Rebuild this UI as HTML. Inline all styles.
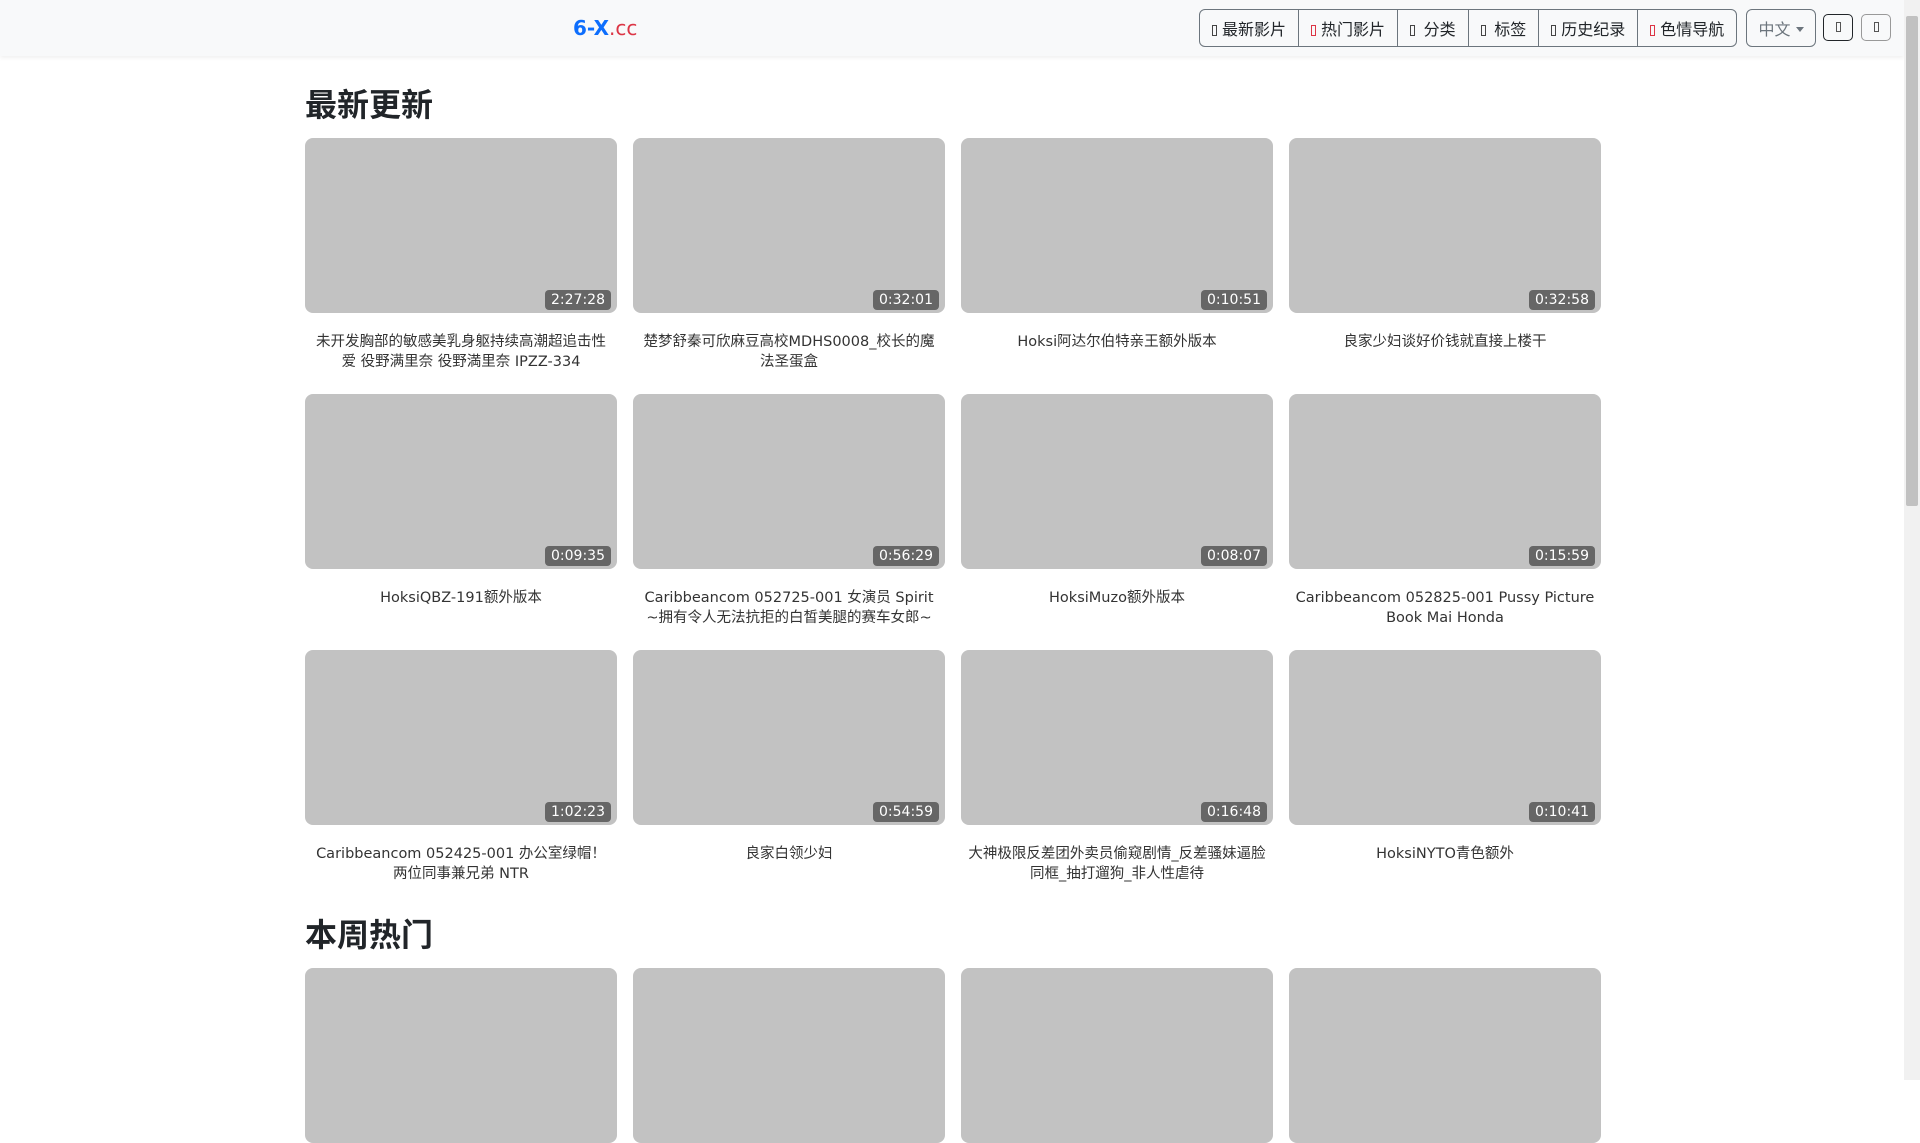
<!DOCTYPE html>
<html><head><meta charset="utf-8"><style>
*{box-sizing:border-box;margin:0;padding:0}
html,body{width:1920px;height:1080px;overflow:hidden;background:#fff;font-family:"DejaVu Sans","Liberation Sans","Noto Sans CJK SC",sans-serif;color:#212529}
.hdr{position:absolute;left:0;top:0;width:1904px;height:56px;background:#f8f9fa;box-shadow:0 2px 4px rgba(0,0,0,.06)}
.logo{position:absolute;left:573px;top:15px;font-size:20px;line-height:26px}
.logo b{color:#0d6efd}.logo span{color:#dc3545}
.nav{position:absolute;left:1199px;top:9px;height:38px;display:flex;border:1px solid #6c757d;border-radius:6px;overflow:hidden}
.nav div{height:36px;line-height:36px;font-size:16px;padding:0 12px;border-left:1px solid #6c757d;font-family:"Noto Sans CJK SC",sans-serif;color:#212529;white-space:nowrap}
.nav div:first-child{border-left:none}
.ic{display:inline-block;width:5px;height:11px;border:1px solid #444;margin-right:5px;vertical-align:-1px}
.r{border-color:#dc3545}
.lang{position:absolute;left:1746px;top:9px;width:70px;height:38px;border:1px solid #6c757d;border-radius:6px;color:#6c757d;font-size:16px;line-height:36px;text-align:center;font-family:"Noto Sans CJK SC",sans-serif}
.lang:after{content:"";display:inline-block;border-top:5px solid #6c757d;border-left:4px solid transparent;border-right:4px solid transparent;margin-left:5px;vertical-align:3px}
.sb{position:absolute;top:14px;width:30px;height:27px;border:1px solid #212529;border-radius:5px;text-align:center}
.sb i{display:inline-block;width:5px;height:10px;border:1px solid #555;margin-top:7px}
.scroll{position:absolute;left:1904px;top:0;width:16px;height:1080px;background:#f1f1f1}
.thumbbar{position:absolute;left:1906px;top:16px;width:12px;height:490px;background:#c1c1c1;border-radius:2px}
h2{position:absolute;left:305px;font-size:32px;font-weight:bold;font-family:"Noto Sans CJK SC",sans-serif;line-height:40px;color:#212529}
.card{position:absolute;width:312px}
.th{height:175px;background:#c2c2c2;border-radius:8px;position:relative}
.d{position:absolute;right:6px;bottom:3px;height:20px;line-height:20px;padding:0 6px;background:#666;color:#fff;font-size:14px;border-radius:4px}
.t{margin-top:19px;text-align:center;font-size:14.5px;line-height:20px;color:#333;padding:0 4px}
</style></head><body>
<div class="hdr">
<div class="logo"><b>6-X</b><span>.cc</span></div>
<div class="nav"><div><i class="ic"></i>最新影片</div><div><i class="ic r"></i>热门影片</div><div><i class="ic"></i> 分类</div><div><i class="ic"></i> 标签</div><div><i class="ic"></i>历史纪录</div><div><i class="ic r"></i>色情导航</div></div>
<div class="lang">中文</div>
<div class="sb" style="left:1823px"><i></i></div>
<div class="sb" style="left:1861px;border-color:#999"><i></i></div>
</div>
<div class="scroll"></div><div class="thumbbar"></div>
<h2 style="top:83px">最新更新</h2>
<h2 style="top:913px">本周热门</h2>

<div class="card" style="left:305px;top:138px"><div class="th"><span class="d">2:27:28</span></div><div class="t">未开发胸部的敏感美乳身躯持续高潮超追击性爱 役野满里奈 役野満里奈 IPZZ-334</div></div>
<div class="card" style="left:633px;top:138px"><div class="th"><span class="d">0:32:01</span></div><div class="t">楚梦舒秦可欣麻豆高校MDHS0008_校长的魔法圣蛋盒</div></div>
<div class="card" style="left:961px;top:138px"><div class="th"><span class="d">0:10:51</span></div><div class="t">Hoksi阿达尔伯特亲王额外版本</div></div>
<div class="card" style="left:1289px;top:138px"><div class="th"><span class="d">0:32:58</span></div><div class="t">良家少妇谈好价钱就直接上楼干</div></div>

<div class="card" style="left:305px;top:394px"><div class="th"><span class="d">0:09:35</span></div><div class="t">HoksiQBZ-191额外版本</div></div>
<div class="card" style="left:633px;top:394px"><div class="th"><span class="d">0:56:29</span></div><div class="t">Caribbeancom 052725-001 女演员 Spirit ~拥有令人无法抗拒的白皙美腿的赛车女郎~</div></div>
<div class="card" style="left:961px;top:394px"><div class="th"><span class="d">0:08:07</span></div><div class="t">HoksiMuzo额外版本</div></div>
<div class="card" style="left:1289px;top:394px"><div class="th"><span class="d">0:15:59</span></div><div class="t">Caribbeancom 052825-001 Pussy Picture Book Mai Honda</div></div>

<div class="card" style="left:305px;top:650px"><div class="th"><span class="d">1:02:23</span></div><div class="t">Caribbeancom 052425-001 办公室绿帽！两位同事兼兄弟 NTR</div></div>
<div class="card" style="left:633px;top:650px"><div class="th"><span class="d">0:54:59</span></div><div class="t">良家白领少妇</div></div>
<div class="card" style="left:961px;top:650px"><div class="th"><span class="d">0:16:48</span></div><div class="t">大神极限反差团外卖员偷窥剧情_反差骚妹逼脸同框_抽打遛狗_非人性虐待</div></div>
<div class="card" style="left:1289px;top:650px"><div class="th"><span class="d">0:10:41</span></div><div class="t">HoksiNYTO青色额外</div></div>

<div class="card" style="left:305px;top:968px"><div class="th"></div></div>
<div class="card" style="left:633px;top:968px"><div class="th"></div></div>
<div class="card" style="left:961px;top:968px"><div class="th"></div></div>
<div class="card" style="left:1289px;top:968px"><div class="th"></div></div>
</body></html>
